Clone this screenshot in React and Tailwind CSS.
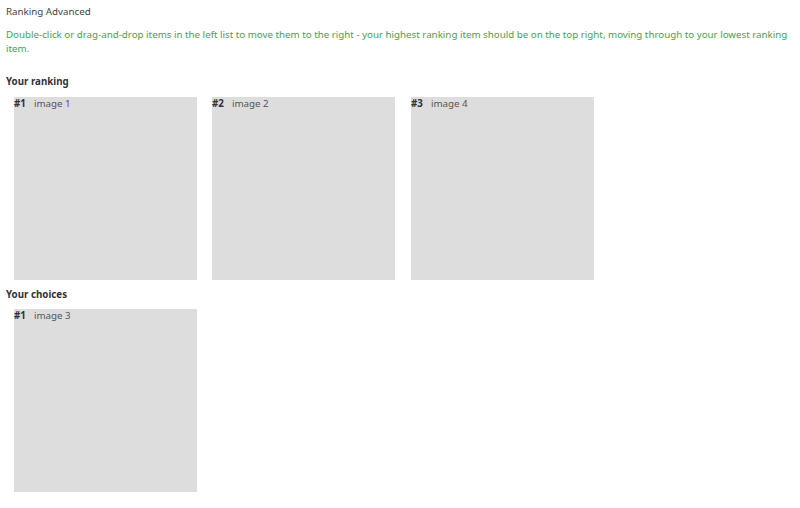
import React from 'react';

const Tile = ({ rank, label }) => (
  <div className="w-[183px] h-[183px] bg-[#dddddd] shrink-0">
    <div className="flex items-center leading-[14px]">
      <span className="font-bold text-[#333]">#{rank}</span>
      <span className="ml-[8px] text-[#555]">{label}</span>
    </div>
  </div>
);

const App = () => {
  const ranking = ['image 1', 'image 2', 'image 4'];
  const choices = ['image 3'];

  return (
    <div
      className="pl-[6px] pr-[4px] pt-[4px] text-[9.75px] bg-white min-h-[508px]"
      style={{ fontFamily: '"Noto Sans", "Open Sans", sans-serif' }}
    >
      <h1 className="leading-[15px] text-[#444]">Ranking Advanced</h1>
      <p className="mt-[9px] leading-[14px] text-[#46a24e]">
        Double-click or drag-and-drop items in the left list to move them to the right - your highest ranking item should be on the top right, moving through to your lowest ranking item.
      </p>

      <h2 className="mt-[19px] leading-[14px] font-bold text-[#333]">Your ranking</h2>
      <div className="mt-[8px] pl-[8px] flex gap-[15px]">
        {ranking.map((r, i) => (
          <div key={r} className={i === 2 ? 'ml-[1px]' : ''}>
            <Tile rank={i + 1} label={r} />
          </div>
        ))}
      </div>

      <h2 className="mt-[8px] leading-[14px] font-bold text-[#333]">Your choices</h2>
      <div className="mt-[7px] pl-[8px] flex gap-[15px]">
        {choices.map((r, i) => (
          <Tile key={r} rank={i + 1} label={r} />
        ))}
      </div>
    </div>
  );
};

export default App;
